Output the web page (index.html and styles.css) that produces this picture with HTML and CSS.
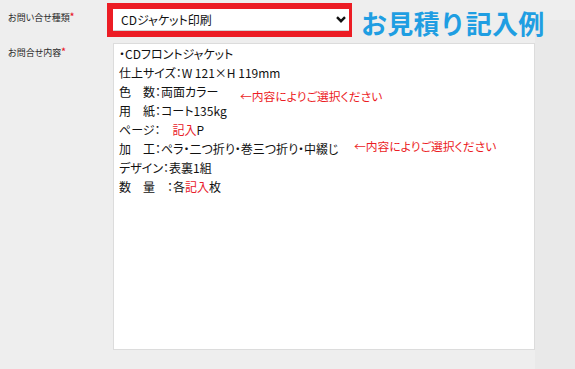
FILE: index.html
```html
<!DOCTYPE html>
<html lang="ja">
<head>
<meta charset="utf-8">
<link rel="stylesheet" href="styles.css">
</head>
<body>
<div class="page">
  <div class="main">
    <div class="row row-select">
      <div class="label">お問い合せ種類<span class="req">*</span></div>
      <div class="select-frame">
        <div class="select">
          <span class="select-text">CDジャケット印刷</span>
          <svg class="chev" width="10" height="7" viewBox="0 0 10 7"><path d="M1 1.2 L5 5.2 L9 1.2" fill="none" stroke="#111" stroke-width="2.4"/></svg>
        </div>
      </div>
      <div class="heading">お見積り記入例</div>
    </div>
    <div class="row row-text">
      <div class="label">お問合せ内容<span class="req">*</span></div>
      <div class="textbox">
        <div class="line">・CDフロントジャケット</div>
        <div class="line">仕上サイズ：W 121×H 119mm</div>
        <div class="line">色　数：両面カラー</div>
        <div class="line">用　紙：コート135kg</div>
        <div class="line">ページ：　<span class="red">記入</span>P</div>
        <div class="line">加　工：ペラ・二つ折り・巻三つ折り・中綴じ</div>
        <div class="line">デザイン：表裏1組</div>
        <div class="line">数　量　：各<span class="red">記入</span>枚</div>
        <div class="note note-1">←内容によりご選択ください</div>
        <div class="note note-2">←内容によりご選択ください</div>
      </div>
    </div>
  </div>
  <div class="aside"></div>
</div>
</body>
</html>
```

FILE: styles.css
```css
html, body {
  margin: 0;
  padding: 0;
}
body {
  background: #eeeeee;
  font-family: "Noto Sans CJK JP", "Noto Sans", sans-serif;
  color: #333;
  width: 575px;
  height: 369px;
  overflow: hidden;
}
.page {
  display: flex;
  height: 369px;
}
.main {
  width: 535px;
  flex: none;
}
.aside {
  flex: 1;
  margin-top: 20px;
  background: #e9e9e9;
}
.row {
  display: flex;
  align-items: flex-start;
}
.row > * {
  flex: none;
}
.row-select {
  padding-top: 3px;
  height: 43px;
  box-sizing: border-box;
  position: relative;
  z-index: 1;
}
.label {
  font-size: 9px;
  line-height: 12px;
  padding-left: 8px;
  color: #2a2a2a;
  white-space: nowrap;
  font-feature-settings: "palt";
}
.row-select .label {
  width: 99px;
  padding-top: 9px;
}
.row-text .label {
  width: 105px;
  padding-top: 4px;
}
.req {
  color: #e8202a;
  font-size: 9px;
  font-weight: bold;
  vertical-align: top;
  line-height: 9px;
}
.select-frame {
  border: solid #ec1c24;
  border-width: 6px 3px 6px 6px;
}
.select {
  width: 236px;
  height: 22px;
  box-sizing: border-box;
  background: #fff;
  border-bottom: 1px solid #d4d4d4;
  display: flex;
  align-items: center;
  justify-content: space-between;
  padding: 0 3px 0 8px;
}
.select-text {
  font-size: 12px;
  color: #111;
  font-feature-settings: "palt";
}
.chev {
  display: block;
}
.heading {
  margin-left: 9px;
  margin-top: 5px;
  font-size: 26px;
  line-height: 30px;
  font-weight: bold;
  color: #1f9ee2;
  white-space: nowrap;
  letter-spacing: 0.2px;
}
.textbox {
  position: relative;
  width: 422px;
  height: 307px;
  box-sizing: border-box;
  background: #fff;
  border: 1px solid #dcdcdc;
  padding: 0 5px;
  font-size: 12px;
  line-height: 19px;
  color: #111;
  font-feature-settings: "palt";
}
.line {
  white-space: pre;
}
.red {
  color: #e8202a;
}
.note {
  position: absolute;
  color: #ec1c24;
  font-size: 11.8px;
  line-height: 14px;
  white-space: nowrap;
}
.note-1 {
  left: 126px;
  top: 45px;
}
.note-2 {
  left: 240px;
  top: 95px;
}
```
